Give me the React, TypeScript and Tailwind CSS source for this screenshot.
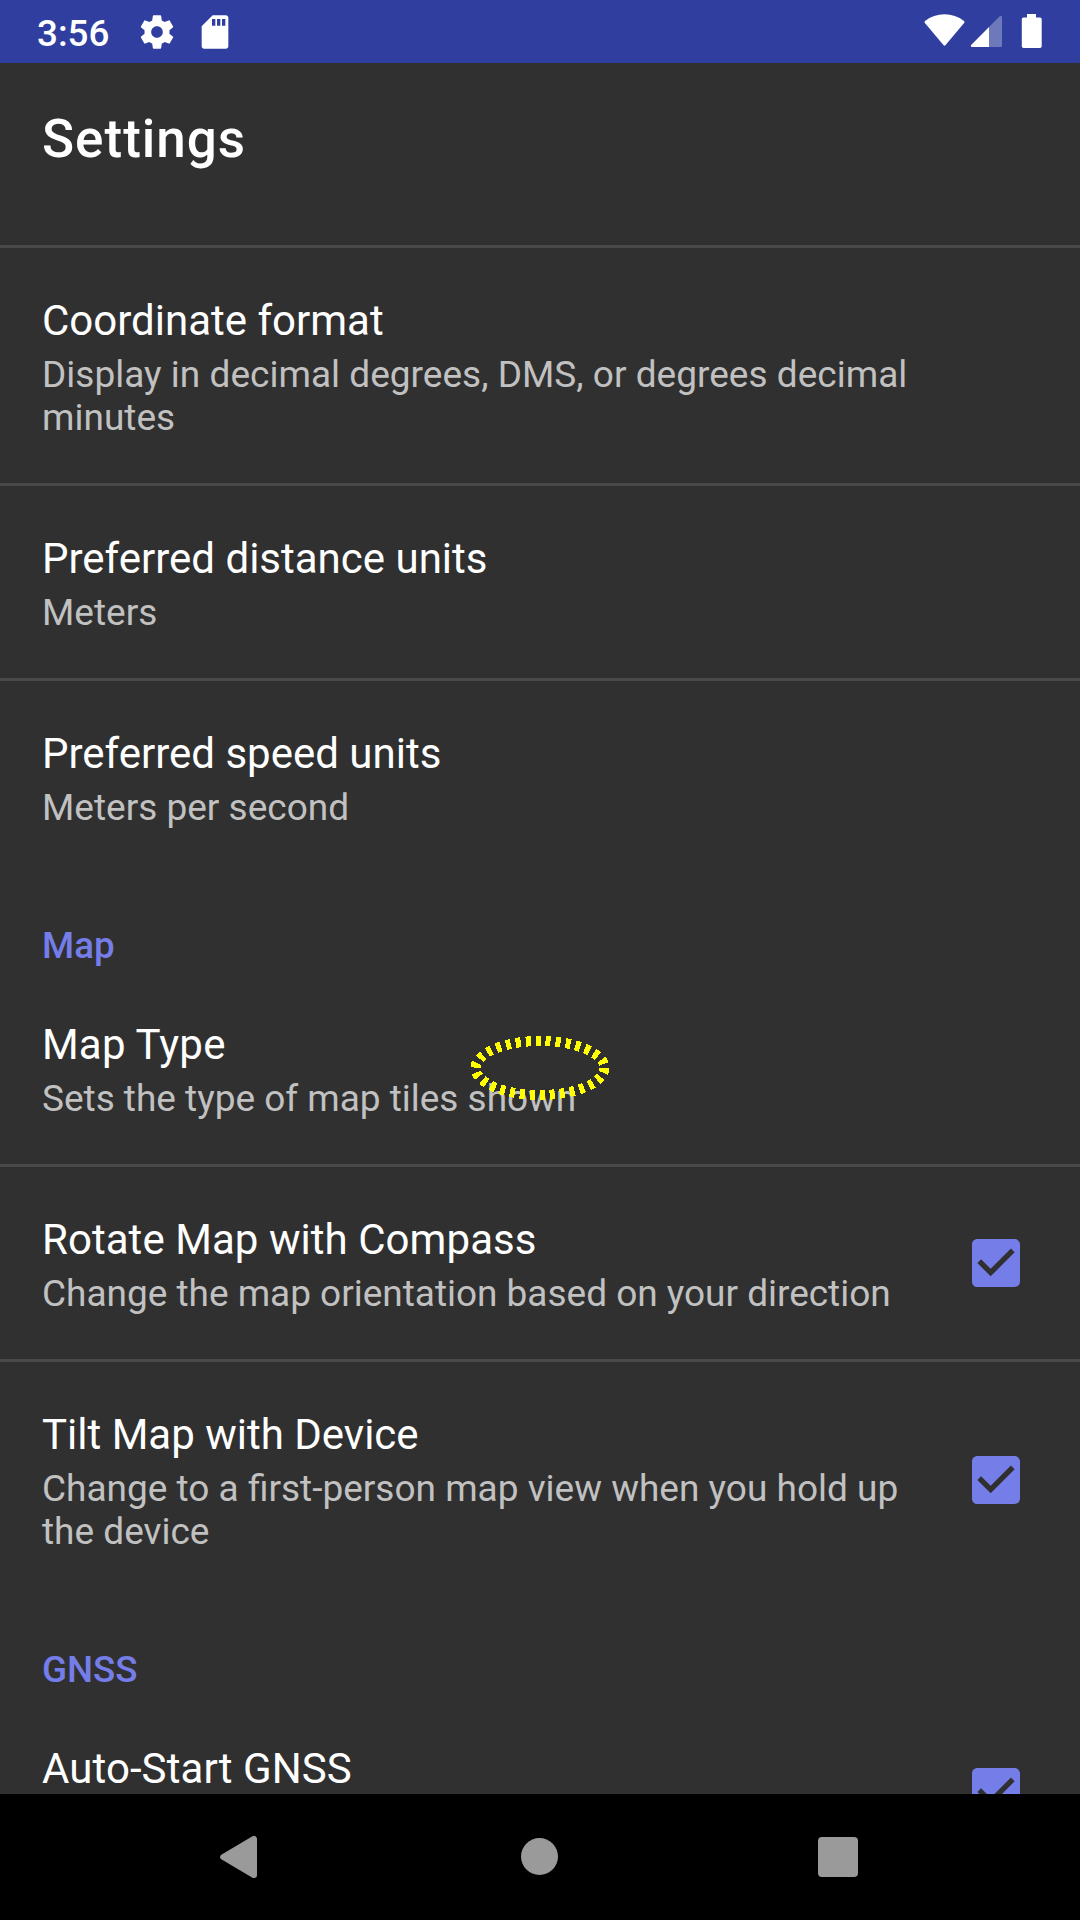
import React from "react";

function Check() {
  return (
    <svg className="block h-[64px] w-[64px]" viewBox="0 0 24 24" fill="#757de8">
      <path d="M19 3H5c-1.110 0-2 .9-2 2v14c0 1.100.89 2 2 2h14c1.110 0 2-.9 2-2V5c0-1.100-.89-2-2-2zm-9 14l-5-5 1.410-1.410L10 14.170l7.590-7.590L19 8l-9 9z" />
    </svg>
  );
}

type RowProps = {
  title: string;
  summary: string;
  checked?: boolean;
  border?: boolean;
  height: string;
  titleTracking?: string;
  summaryTracking?: string;
};

function Row({ title, summary, checked, border, height, titleTracking = "", summaryTracking = "" }: RowProps) {
  return (
    <div className={`flex shrink-0 items-start pl-[42px] ${height} ${border ? "border-b-[3px] border-[#494949]" : ""}`}>
      <div className="w-[882px] pt-[48px]">
        <div className={`whitespace-nowrap text-[42px] leading-[49px] text-white ${titleTracking}`}>{title}</div>
        <div className={`mt-[8px] whitespace-pre-line text-[37px] leading-[43px] text-[#c1c1c1] ${summaryTracking}`}>{summary}</div>
      </div>
      {checked && (
        <div className="flex h-[192px] w-[144px] items-center justify-center self-center">
          <Check />
        </div>
      )}
    </div>
  );
}

function Category({ name }: { name: string }) {
  return (
    <div className="h-[99px] shrink-0 pl-[42px] pt-[51px] text-[36.75px] font-medium leading-[43px] text-[#757de8]">
      {name}
    </div>
  );
}

function StatusBar() {
  return (
    <div className="flex h-[63px] shrink-0 bg-[#303f9f] text-white">
      <div className="w-[100px] shrink-0 pl-[37px] pt-[12px] text-[36.75px] font-medium leading-[44px]">3:56</div>
      <svg className="ml-[37px] mt-[12px] h-[40px] w-[40px] shrink-0" viewBox="0 0 24 24" fill="currentColor">
        <path d="M19.430 12.980c.04-.32.07-.64.07-.98s-.03-.66-.07-.98l2.110-1.650c.19-.15.24-.42.12-.64l-2-3.460c-.12-.22-.39-.3-.61-.22l-2.490 1c-.52-.4-1.080-.73-1.690-.98l-.38-2.650C14.460 2.180 14.250 2 14 2h-4c-.25 0-.46.18-.49.42l-.38 2.650c-.61.25-1.170.59-1.690.98l-2.490-1c-.23-.09-.49 0-.61.22l-2 3.460c-.13.22-.07.49.12.64l2.110 1.650c-.04.32-.07.65-.07.98s.03.66.07.98l-2.110 1.650c-.19.15-.24.42-.12.64l2 3.460c.12.22.39.3.61.22l2.490-1c.52.4 1.080.73 1.690.98l.38 2.650c.03.24.24.42.49.42h4c.25 0 .46-.18.49-.42l.38-2.650c.61-.25 1.170-.59 1.690-.98l2.490 1c.23.09.49 0 .61-.22l2-3.460c.12-.22.07-.49-.12-.64l-2.110-1.650zM12 15.500c-1.930 0-3.500-1.570-3.500-3.500s1.570-3.500 3.500-3.500 3.500 1.570 3.500 3.500-1.570 3.500-3.500 3.500z" />
      </svg>
      <svg className="ml-[18px] mt-[12px] h-[40px] w-[40px] shrink-0" viewBox="0 0 24 24" fill="currentColor">
        <path d="M18.500 2H10.600L4 8.600V20.500c0 .83.67 1.500 1.500 1.500h13c.83 0 1.500-.67 1.500-1.500v-17c0-.83-.67-1.500-1.500-1.500zM12.200 8.300h-2V4.200h2zm3 0h-2V4.200h2zm3 0h-2V4.200h2z" />
      </svg>
      <svg className="ml-auto mr-[5px] h-[63px] w-[42px] shrink-0" viewBox="923 0 42 63" fill="currentColor">
        <path d="M924.700 22.800Q924 21.700 925 20.900A32 32 0 0 1 964 20.900Q965 21.700 964.300 22.800L945.600 45.100Q944.500 46.200 943.400 45.100Z" />
      </svg>
      <svg className="mr-[18px] h-[63px] w-[32px] shrink-0" viewBox="970 0 32 63" fill="currentColor">
        <path fillOpacity=".3" d="M989 27.100L999.800 16.300Q1000.600 15.700 1001.500 16Q1002 16.300 1002 17.200V45.800Q1002 47 1000.800 47H989Z" />
        <path d="M989 27.100V47H972.200Q970.900 47 970.800 45.900Q970.800 45.200 971.400 44.700Z" />
      </svg>
      <svg className="mr-[38px] h-[63px] w-[22px] shrink-0" viewBox="1020 0 22 63" fill="currentColor">
        <path d="M1027 14H1036V17.500H1040Q1041.700 17.500 1041.700 19.200V46.200Q1041.700 47.900 1040 47.900H1023.500Q1021.800 47.900 1021.800 46.200V19.200Q1021.800 17.500 1023.500 17.500H1027Z" />
      </svg>
    </div>
  );
}

function NavBar() {
  return (
    <div className="flex h-[126px] shrink-0 items-start bg-black text-[#9a9a9a]">
      <svg className="ml-[219px] mt-[41px] h-[44px] w-[39px]" viewBox="219 1835 39 44" fill="currentColor" stroke="currentColor" strokeWidth="6" strokeLinejoin="round">
        <path d="M223.200 1857L254 1838.900V1875.100Z" />
      </svg>
      <div className="ml-[263px] mt-[44px] h-[37px] w-[37px] rounded-full bg-[#9a9a9a]" />
      <div className="ml-[260px] mt-[43px] h-[40px] w-[40px] rounded-[4px] bg-[#9a9a9a]" />
    </div>
  );
}

export default function App() {
  return (
    <div className="relative flex h-[1920px] w-[1080px] flex-col overflow-hidden bg-[#303030] font-['Roboto',sans-serif]">
      <StatusBar />
      <div className="h-[185px] shrink-0 border-b-[3px] border-[#494949] pl-[42px] pt-[43px] text-[53px] font-medium leading-[66px] tracking-[1px] text-white">
        Settings
      </div>
      <div className="flex min-h-0 flex-1 flex-col overflow-hidden">
        <Row title="Coordinate format" summary={"Display in decimal degrees, DMS, or degrees decimal\nminutes"} border height="h-[238px]" summaryTracking="tracking-[0.02px]" />
        <Row title="Preferred distance units" summary="Meters" border height="h-[195px]" />
        <Row title="Preferred speed units" summary="Meters per second" height="h-[192px]" />
        <Category name="Map" />
        <Row title="Map Type" summary="Sets the type of map tiles shown" border height="h-[195px]" titleTracking="tracking-[0.2px]" summaryTracking="tracking-[-0.02px]" />
        <Row title="Rotate Map with Compass" summary="Change the map orientation based on your direction" checked border height="h-[195px]" titleTracking="tracking-[0.05px]" summaryTracking="tracking-[-0.02px]" />
        <Row title="Tilt Map with Device" summary={"Change to a first-person map view when you hold up\nthe device"} checked height="h-[235px]" summaryTracking="[font-variant-ligatures:common-ligatures] tracking-normal" />
        <Category name="GNSS" />
        <Row title="Auto-Start GNSS" summary="" checked border height="h-[195px]" titleTracking="tracking-[0.08px]" />
      </div>
      <NavBar />
      <svg className="pointer-events-none absolute left-[470px] top-[1036px] h-[64px] w-[140px]" viewBox="0 0 140 64" fill="none" shapeRendering="crispEdges">
        <ellipse cx="70" cy="32" rx="64.500" ry="27" stroke="#ffff00" strokeWidth="10" strokeDasharray="5 5" />
      </svg>
    </div>
  );
}
